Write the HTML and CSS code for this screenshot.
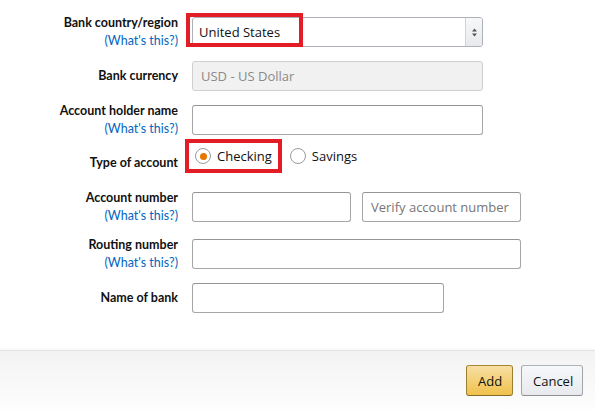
FILE: index.html
```html
<!DOCTYPE html>
<html>
<head>
<meta charset="utf-8">
<link rel="stylesheet" href="styles.css">
</head>
<body>
<div class="page">
  <form class="form">
    <div class="row">
      <div class="label"><b>Bank country/region</b><a href="#">(What's this?)</a></div>
      <div class="field">
        <div class="select">
          <span class="select-text">United States</span>
          <span class="select-arrow">
            <svg width="7" height="9" viewBox="0 0 7 9"><path d="M3.5 0.5 L6 3.5 H1 Z M3.5 8.5 L6 5.5 H1 Z" fill="#555"/></svg>
          </span>
          <span class="mark mark-select"></span>
        </div>
      </div>
    </div>
    <div class="row gap14">
      <div class="label"><b>Bank currency</b></div>
      <div class="field"><div class="input disabled wide">USD - US Dollar</div></div>
    </div>
    <div class="row gap14">
      <div class="label"><b>Account holder name</b><a href="#">(What's this?)</a></div>
      <div class="field"><div class="input wide"></div></div>
    </div>
    <div class="row radio-row">
      <div class="label type-label"><b>Type of account</b></div>
      <div class="field radios">
        <span class="mark mark-radio"></span>
        <label class="radio"><span class="circle checked"></span>Checking</label>
        <label class="radio"><span class="circle"></span>Savings</label>
      </div>
    </div>
    <div class="row gap19">
      <div class="label"><b>Account number</b><a href="#">(What's this?)</a></div>
      <div class="field pair">
        <div class="input half"></div>
        <div class="input half placeholder">Verify account number</div>
      </div>
    </div>
    <div class="row gap17">
      <div class="label"><b>Routing number</b><a href="#">(What's this?)</a></div>
      <div class="field"><div class="input routing"></div></div>
    </div>
    <div class="row gap14">
      <div class="label"><b>Name of bank</b></div>
      <div class="field"><div class="input bank"></div></div>
    </div>
  </form>
  <div class="footer">
    <button class="btn btn-primary" type="button">Add</button>
    <button class="btn btn-secondary" type="button">Cancel</button>
  </div>
</div>
</body>
</html>
```
FILE: styles.css
```css
* { box-sizing: border-box; }
html, body { margin: 0; padding: 0; background: #fff; }
body {
  font-family: "Open Sans", "DejaVu Sans", sans-serif;
  color: #111;
  width: 595px;
  height: 409px;
  overflow: hidden;
}
.page { display: flex; flex-direction: column; height: 409px; }
.form { height: 350px; padding-top: 17px; }
.row {
  display: flex;
  align-items: center;
  height: 30px;
}
.gap14 { margin-top: 14px; }
.gap17 { margin-top: 17px; }
.gap19 { margin-top: 19px; }
.label {
  width: 178px;
  flex: none;
  text-align: right;
  font-family: "Lato", "Open Sans", sans-serif;
  font-size: 12.5px;
  line-height: 18px;
  display: flex;
  flex-direction: column;
  align-items: flex-end;
}
.label b { font-weight: 700; color: #111; }
.label a { color: #0066c0; text-decoration: none; }
.field {
  margin-left: 14px;
  position: relative;
  display: flex;
  align-items: center;
}
.select {
  position: relative;
  width: 291px;
  height: 30px;
  border: 1px solid #adb1b8;
  border-radius: 3px;
  background: #fff;
  display: flex;
  align-items: center;
  font-size: 13px;
}
.select-text { padding-left: 6px; flex: 1; }
.select-arrow {
  width: 17px;
  height: 28px;
  border-left: 1px solid #cfd2d6;
  background: linear-gradient(#f7f8fa, #e7e9ec);
  border-radius: 0 2px 2px 0;
  display: flex;
  align-items: center;
  justify-content: center;
}
.input {
  height: 30px;
  border: 1px solid #a6a6a6;
  border-top-color: #949494;
  border-radius: 3px;
  background: #fff;
  font-size: 13px;
  line-height: 28px;
  padding: 0 8px;
}
.wide { width: 291px; }
.half { width: 159px; }
.routing { width: 329px; }
.bank { width: 252px; }
.pair { gap: 11px; }
.disabled {
  background: #f1f1f1;
  border-color: #d0d0d0;
  color: #8a8a8a;
}
.placeholder { color: #767676; }
.radio-row {
  margin-top: 4px;
  height: 34px;
}
.type-label { align-self: flex-start; margin-top: 15px; }
.radios { height: 34px; }
.radio {
  display: flex;
  align-items: center;
  font-size: 13px;
  margin-right: 15px;
}
.circle {
  width: 16px;
  height: 16px;
  border-radius: 50%;
  border: 1px solid #9a9a9a;
  background: #fff;
  margin-left: 3px;
  margin-right: 6px;
  display: inline-flex;
  align-items: center;
  justify-content: center;
}
.circle.checked::after {
  content: "";
  width: 7px;
  height: 7px;
  border-radius: 50%;
  background: #e77600;
}
.mark {
  position: absolute;
  border: 4px solid #e31d25;
  pointer-events: none;
}
.mark-select { left: -7px; top: -5px; width: 117px; height: 34px; }
.mark-radio { left: -7px; top: 0; width: 97px; height: 34px; }
.footer {
  height: 59px;
  border-top: 1px solid #e3e3e3;
  box-shadow: 0 -1px 2px rgba(0,0,0,0.04);
  background: linear-gradient(#f3f3f3, #fdfdfd);
  display: flex;
  justify-content: flex-end;
  align-items: flex-start;
  padding-top: 14px;
  padding-right: 12px;
  gap: 8px;
}
.btn {
  height: 31px;
  border-radius: 3px;
  font-family: inherit;
  font-size: 13px;
  color: #111;
  padding: 0 11px;
  border: 1px solid;
}
.btn-primary {
  width: 47px;
  background: linear-gradient(#f7dfa5, #f0c14b);
  border-color: #a88734 #9c7e31 #846a29;
}
.btn-secondary {
  width: 62px;
  background: linear-gradient(#f7f8fa, #e7e9ec);
  border-color: #adb1b8 #a2a6ac #8d9096;
}
```
